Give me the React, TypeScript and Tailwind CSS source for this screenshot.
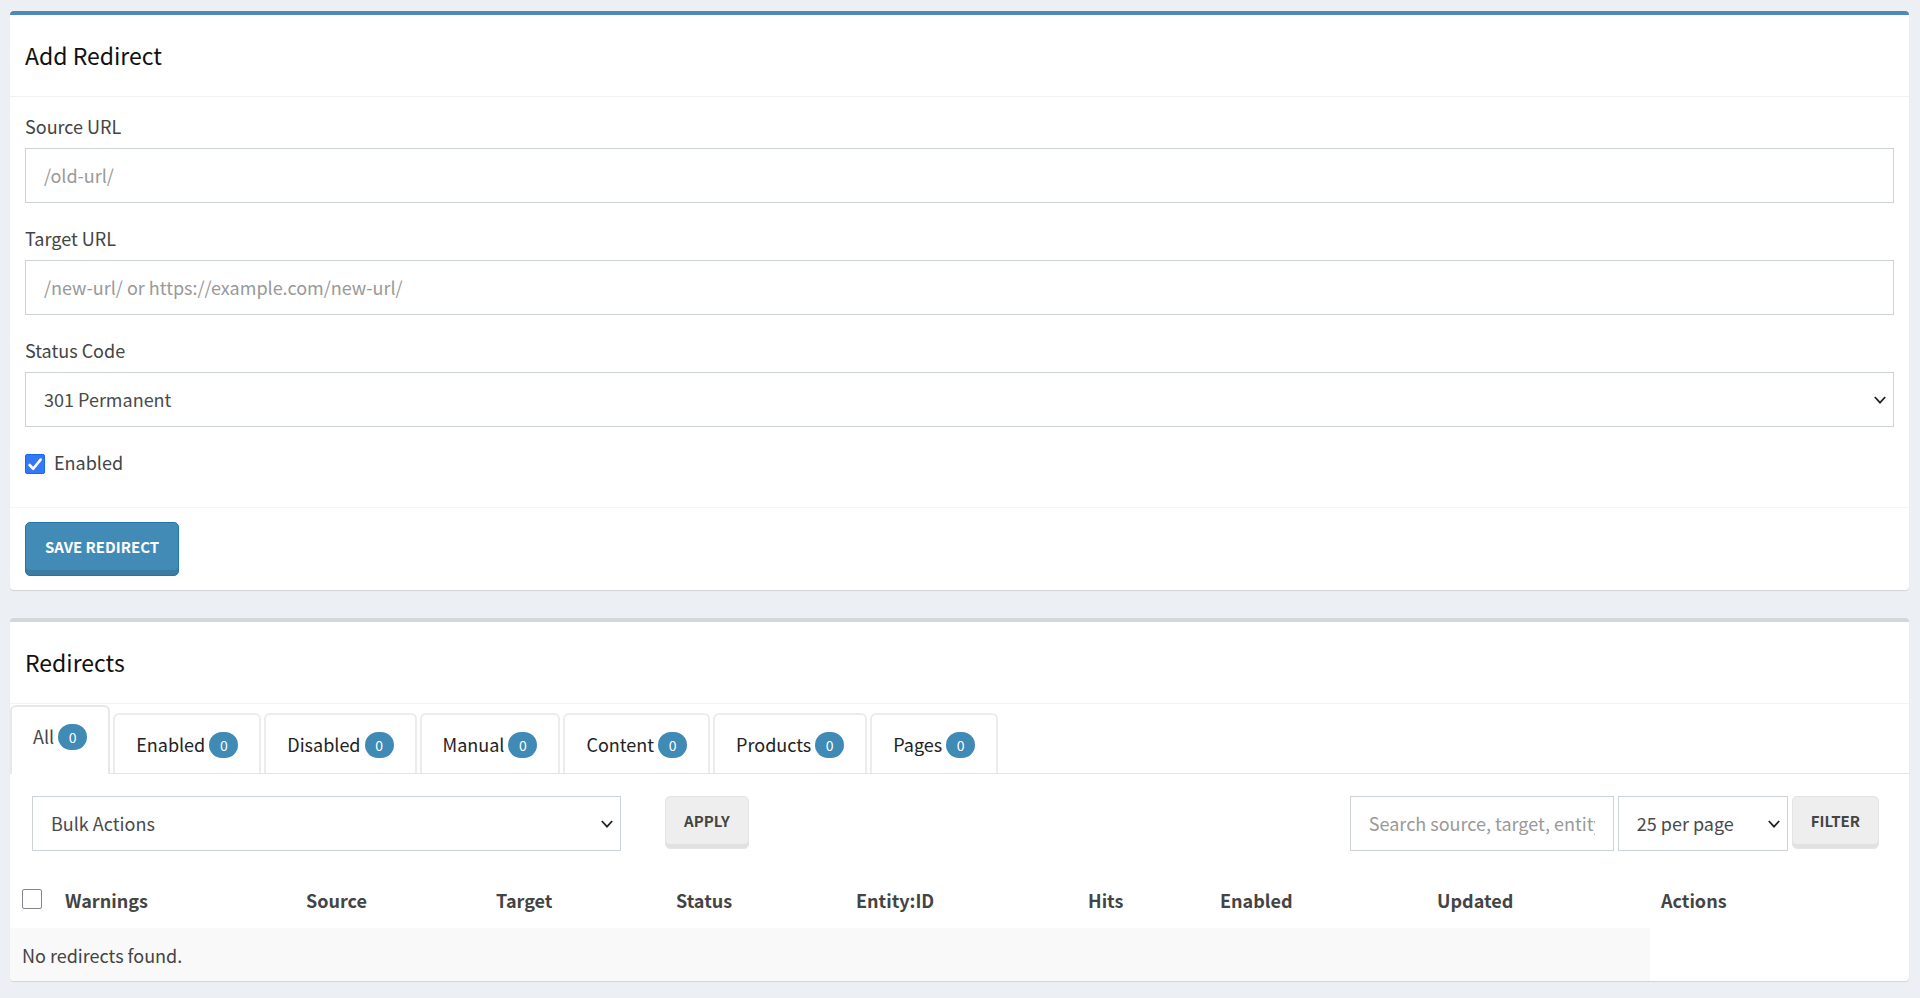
import React, { useState } from 'react';

const tabs = ['All', 'Enabled', 'Disabled', 'Manual', 'Content', 'Products', 'Pages'];

const fieldClass =
  'block h-[55px] w-full appearance-none rounded-none border border-[#cdd1dc] bg-white px-[18px] pb-[2px] text-[18px] leading-[26px] text-[#4a4a4a] outline-none placeholder:text-[#999]';

const defaultButtonClass =
  'h-[53px] rounded-[5px] border border-[#e4e4e4] bg-[#eee] px-[18px] pb-[3px] text-[15px] font-bold uppercase text-[#444] shadow-[inset_0_-4px_0_#e1e1e1]';

const Chevron = () => (
  <svg
    className="pointer-events-none absolute right-[8px] top-1/2 h-[8px] w-[12px] -translate-y-1/2"
    viewBox="0 0 12 8"
    fill="none"
    stroke="#222"
    strokeWidth="1.8"
  >
    <path d="M0.8 1 L6 6.6 L11.2 1" />
  </svg>
);

const Checkbox = ({ id, label, defaultChecked = false }: { id: string; label?: string; defaultChecked?: boolean }) => (
  <span className="relative block h-[20px] w-[20px]">
    <input
      id={id}
      type="checkbox"
      aria-label={label}
      defaultChecked={defaultChecked}
      className="peer block h-[20px] w-[20px] appearance-none rounded-[2px] border border-[#85858f] bg-white checked:border-[#1d66f0] checked:bg-[#3478f6]"
    />
    <svg
      className="pointer-events-none absolute inset-0 hidden h-[20px] w-[20px] peer-checked:block"
      viewBox="0 0 20 20"
      fill="none"
      stroke="#fff"
      strokeWidth="2.6"
      strokeLinecap="round"
      strokeLinejoin="round"
    >
      <path d="M4.6 11 L8.2 14.8 L15.6 5.6" />
    </svg>
  </span>
);

const AddRedirect = () => {
  return (
    <section className="rounded-[4px] border-t-4 border-[#4b8ab9] bg-white shadow-[0_1px_1px_rgba(0,0,0,0.12)]">
      <header className="border-b border-[#f1f1f1] px-[15px] py-[24px]">
        <h3 className="text-[23px] leading-[33px] text-[#111]">Add Redirect</h3>
      </header>
      <form onSubmit={(e) => e.preventDefault()}>
        <div className="flex flex-col gap-[23px] px-[15px] pb-[33px] pt-[17px]">
          <div>
            <label htmlFor="source" className="mb-[10px] block leading-[24px]">
              Source URL
            </label>
            <input id="source" type="text" placeholder="/old-url/" className={fieldClass} />
          </div>
          <div>
            <label htmlFor="target" className="mb-[10px] block leading-[24px]">
              Target URL
            </label>
            <input
              id="target"
              type="text"
              placeholder="/new-url/ or https://example.com/new-url/"
              className={fieldClass}
            />
          </div>
          <div>
            <label htmlFor="status" className="mb-[10px] block leading-[24px]">
              Status Code
            </label>
            <div className="relative">
              <select id="status" className={fieldClass}>
                <option>301 Permanent</option>
                <option>302 Temporary</option>
              </select>
              <Chevron />
            </div>
          </div>
          <div className="flex items-end gap-[9px]">
            <Checkbox id="enabled" defaultChecked />
            <label htmlFor="enabled" className="leading-[24px]">
              Enabled
            </label>
          </div>
        </div>
        <footer className="border-t border-[#f4f4f4] px-[15px] py-[14px]">
          <button
            type="submit"
            className="h-[54px] rounded-[5px] border border-[#1f78a8] bg-[#428bb7] px-[19px] pb-[4px] text-[15px] font-bold uppercase text-white shadow-[inset_0_-5px_0_#3a7ca3]"
          >
            Save Redirect
          </button>
        </footer>
      </form>
    </section>
  );
};

const Redirects = () => {
  const [tab, setTab] = useState('All');

  return (
    <section className="overflow-hidden rounded-[4px] border-t-4 border-[#d2d6de] bg-white shadow-[0_1px_1px_rgba(0,0,0,0.12)]">
      <header className="border-b border-[#f4f4f4] px-[15px] py-[24px]">
        <h3 className="text-[23px] leading-[33px] text-[#111]">Redirects</h3>
      </header>
      <nav className="flex items-end gap-[3px] border-b border-[#e4e4e4] pt-px">
        {tabs.map((name) => (
          <button
            key={name}
            type="button"
            onClick={() => setTab(name)}
            className={
              tab === name
                ? '-mb-px flex h-[69px] items-start gap-[4px] rounded-t-[6px] border-2 border-b-0 border-[#e8e8e8] bg-white px-[21px] pt-[17px] text-[#444]'
                : 'flex h-[60px] items-start gap-[4px] rounded-t-[6px] border-2 border-b-0 border-[#ececec] bg-white px-[21px] pt-[17px] text-[#222]'
            }
          >
            <span className="leading-[24px]">{name}</span>
            <span className="h-[26px] w-[29px] rounded-full bg-[#408ab6] text-[14px] leading-[26px] text-white">0</span>
          </button>
        ))}
      </nav>
      <div className="flex items-start justify-between pt-[22px]">
        <div className="relative mx-[22px] flex-1">
          <select aria-label="Bulk Actions" className={fieldClass}>
            <option>Bulk Actions</option>
            <option>Delete</option>
          </select>
          <Chevron />
        </div>
        <div className="flex w-2/3 justify-between pl-[22px] pr-[30px]">
          <button type="button" className={defaultButtonClass}>
            Apply
          </button>
          <form className="flex gap-[4px]" onSubmit={(e) => e.preventDefault()}>
            <div className="w-[264px]">
              <input
                type="text"
                aria-label="Search"
                placeholder="Search source, target, entity"
                className={fieldClass}
              />
            </div>
            <div className="relative w-[170px]">
              <select aria-label="Per page" className={fieldClass}>
                <option>25 per page</option>
                <option>50 per page</option>
              </select>
              <Chevron />
            </div>
            <button type="submit" className={defaultButtonClass}>
              Filter
            </button>
          </form>
        </div>
      </div>
      <table className="mt-[22px] w-full text-left">
        <thead>
          <tr className="h-[55px]">
            <th className="w-[44px] pb-[3px] pl-[12px]">
              <Checkbox id="check-all" label="Select all" />
            </th>
            <th className="w-[241px] pb-[1px] pl-[11px]">Warnings</th>
            <th className="w-[190px] pb-[1px] pl-[11px]">Source</th>
            <th className="w-[180px] pb-[1px] pl-[11px]">Target</th>
            <th className="w-[180px] pb-[1px] pl-[11px]">Status</th>
            <th className="w-[232px] pb-[1px] pl-[11px]">Entity:ID</th>
            <th className="w-[132px] pb-[1px] pl-[11px]">Hits</th>
            <th className="w-[217px] pb-[1px] pl-[11px]">Enabled</th>
            <th className="w-[224px] pb-[1px] pl-[11px]">Updated</th>
            <th className="w-[259px] pb-[1px] pl-[11px]">Actions</th>
          </tr>
        </thead>
        <tbody>
          <tr className="h-[53px]">
            <td colSpan={9} className="bg-[#f9f9f9] pl-[12px]">
              No redirects found.
            </td>
          </tr>
        </tbody>
      </table>
    </section>
  );
};

const App = () => {
  return (
    <div className="flex min-h-screen flex-col gap-[28px] bg-[#ecf0f5] pl-[10px] pr-[11px] pt-[11px] font-['Noto_Sans_CJK_SC',sans-serif] text-[18px] leading-[26px] text-[#444]">
      <AddRedirect />
      <Redirects />
    </div>
  );
};

export default App;
